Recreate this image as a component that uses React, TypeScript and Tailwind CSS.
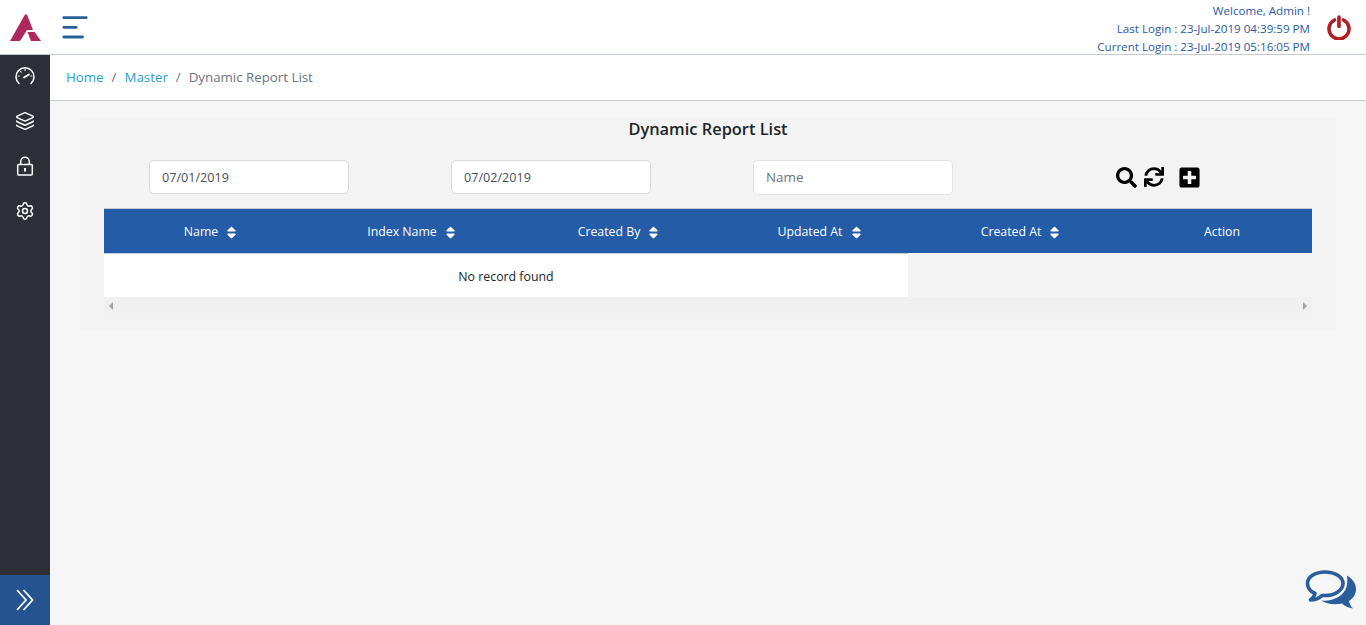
import { Layers, Settings } from "lucide-react"
import { FaSearch, FaSync, FaPlusSquare, FaSort } from "react-icons/fa"

const columns = [
  { label: "Name", sort: true },
  { label: "Index Name", sort: true },
  { label: "Created By", sort: true },
  { label: "Updated At", sort: true },
  { label: "Created At", sort: true },
  { label: "Action", sort: false },
]

function Logo() {
  return (
    <svg width="32" height="28" viewBox="0 0 32 28">
      <path d="M1 28 L16 1.500 H18 L24 17 H18 L11 28 Z" fill="#ae285d" />
      <path d="M18.500 19 H25.500 L32 28 H22 Z" fill="#ae285d" />
    </svg>
  )
}

function Hamburger() {
  return (
    <svg width="28" height="26" viewBox="0 0 28 26">
      <path d="M1.800 3.700 H24.200 M1.800 13.300 H14.200 M1.800 23 H20.500" stroke="#2a6099" strokeWidth="2.800" strokeLinecap="round" />
    </svg>
  )
}

function PowerIcon() {
  return (
    <svg width="24" height="26" viewBox="0 0 24 26" fill="none" stroke="#b11f24" strokeLinecap="round">
      <path d="M7.500 6 A10 10 0 1 0 16.500 6" strokeWidth="3.600" />
      <path d="M12 3 V12.500" strokeWidth="3.600" />
    </svg>
  )
}

function GaugeIcon() {
  return (
    <svg width="20" height="20" viewBox="0 0 20 20" fill="none" stroke="white" strokeLinecap="round">
      <path d="M4 17.500 A9 9 0 1 1 16 17.500" strokeWidth="1.500" />
      <path d="M9 11.500 L14 8.500" strokeWidth="1.800" />
      <path d="M10 3.500 V4.500 M4.200 10 H3.200 M16.800 10 H15.800 M5.500 5.500 L6.200 6.200" strokeWidth="1.200" />
    </svg>
  )
}

function LockIcon() {
  return (
    <svg width="20" height="20" viewBox="0 0 20 20" fill="none" stroke="white">
      <rect x="2.700" y="8.500" width="14.600" height="10.500" rx="1" strokeWidth="1.500" />
      <path d="M5.700 8.500 V5.500 A4.300 4.300 0 0 1 14.300 5.500 V8.500" strokeWidth="1.500" />
      <path d="M10 12 V15.500" strokeWidth="2" />
    </svg>
  )
}

function DoubleChevron() {
  return (
    <svg width="18" height="22" viewBox="0 0 18 22" fill="none" stroke="white" strokeWidth="1.800">
      <path d="M1 1 L10 11 L1 21" />
      <path d="M7.500 1 L16.500 11 L7.500 21" />
    </svg>
  )
}

function ChatBubbles() {
  return (
    <svg width="52" height="46" viewBox="0 0 52 46">
      <path d="M20 3 C10 3 2.500 8 2.500 14.500 C2.500 19 5.500 22.500 10 24.500 C9.500 27 8 29 5.500 31 C10 31 14.500 29 17 26.500 C18 26.500 19 26.500 20 26.500 C30 26.500 38 21 38 14.500 C38 8 30 3 20 3 Z" fill="none" stroke="#2a5d9c" strokeWidth="3.600" strokeLinejoin="round" />
      <path d="M42 6.500 C47 9.500 51 14 51 20 C51 25.500 48 29.500 44 32 C44.500 35 46 37.500 48 39.500 C43.500 39 39.500 37 37 34.500 C30 36 21 35 16 31.500 C27 33 39 27 41.500 18 C42.500 14 42.500 10 42 6.500 Z" fill="#2a5d9c" />
    </svg>
  )
}

export default function App() {
  return (
    <div className="relative h-[625px] w-[1366px] overflow-hidden flex flex-col bg-[#f6f6f6] font-['Open_Sans',sans-serif]">
      {/* Top bar */}
      <header className="h-[55px] shrink-0 flex items-center justify-between bg-white border-b border-[#c4cbd3]">
        <div className="flex items-center pl-[9px] gap-[21px]">
          <Logo />
          <Hamburger />
        </div>
        <div className="flex items-center">
          <div className="pt-[3px] text-right text-[11.6px] leading-[18px] text-[#2b5aa6]">
            <div>Welcome, Admin !</div>
            <div>Last Login : 23-Jul-2019 04:39:59 PM</div>
            <div>Current Login : 23-Jul-2019 05:16:05 PM</div>
          </div>
          <div className="ml-[17px] mr-[15px]"><PowerIcon /></div>
        </div>
      </header>

      <div className="flex flex-1 min-h-0">
        {/* Sidebar */}
        <aside className="w-[50px] shrink-0 flex flex-col items-center justify-between bg-[#2d2f36]">
          <div className="flex flex-col items-center gap-[25px] pt-[11px] text-white">
            <GaugeIcon />
            <Layers size={20} strokeWidth={1.8} />
            <LockIcon />
            <Settings size={20} strokeWidth={1.8} />
          </div>
          <div className="w-full h-[50px] flex items-center justify-center bg-[#24538f]">
            <DoubleChevron />
          </div>
        </aside>

        <main className="flex-1 min-w-0">
          {/* Breadcrumb */}
          <nav className="h-[46px] flex items-center gap-2 pl-4 pt-px bg-white border-b border-[#c4cbd3] text-[13.3px] text-[#6c757d]">
            <span className="text-[#2a9fd6]">Home</span>
            <span>/</span>
            <span className="text-[#2a9fd6]">Master</span>
            <span>/</span>
            <span>Dynamic Report List</span>
          </nav>

          {/* Report panel */}
          <section className="mt-4 ml-[30px] w-[1256px] h-[214px] bg-[#f3f3f3] px-6">
            <h1 className="pt-[1px] text-center text-[16.4px] leading-[22px] font-semibold text-[#212529]">Dynamic Report List</h1>
            <div className="mt-[19px] grid grid-cols-4 items-center h-[36px]">
              <div className="pl-[45px]">
                <input readOnly value="07/01/2019" className="w-[200px] h-[34px] rounded-[5px] border border-[#d9d9d9] bg-white px-3 text-[12.6px] text-[#495057] outline-none" />
              </div>
              <div className="pl-[45px]">
                <input readOnly value="07/02/2019" className="w-[200px] h-[34px] rounded-[5px] border border-[#d9d9d9] bg-white px-3 text-[12.6px] text-[#495057] outline-none" />
              </div>
              <div className="pl-[45px]">
                <input readOnly placeholder="Name" className="w-[200px] h-[35px] rounded-[5px] border border-[#e3e3e3] bg-white px-3 text-[13.4px] placeholder:text-[#6c757d] outline-none" />
              </div>
              <div className="flex items-center pl-[106px] text-black">
                <FaSearch size={21} />
                <FaSync size={20} className="ml-[7px]" />
                <FaPlusSquare size={23} className="ml-[14px]" />
              </div>
            </div>

            <div className="mt-[13px] grid grid-cols-[215px_187px_227px_175px_227px_177px] h-[45px] items-center bg-[#245ca8] border-t border-[#c4cbd3] text-[12.3px] text-white">
              {columns.map((col) => (
                <div key={col.label} className={`flex items-center justify-center gap-[6px] pt-[2px] ${col.sort ? "" : "pr-[3px]"}`}>
                  <span>{col.label}</span>
                  {col.sort && <FaSort size={15} />}
                </div>
              ))}
            </div>
            <div className="w-[804px] h-[44px] flex items-center justify-center border-t border-[#c5cede] bg-white pt-[4px] text-[12.35px] text-[#212529]">
              No record found
            </div>
            <div className="h-[17px] flex items-center justify-between px-[5px] bg-[#f0f0f0]">
              <span className="border-y-[4px] border-r-[4px] border-y-transparent border-r-[#a3a3a3]" />
              <span className="border-y-[4px] border-l-[4px] border-y-transparent border-l-[#a3a3a3]" />
            </div>
          </section>
        </main>
      </div>

      {/* Chat launcher */}
      <div className="absolute right-[9px] bottom-[10px]">
        <ChatBubbles />
      </div>
    </div>
  )
}
